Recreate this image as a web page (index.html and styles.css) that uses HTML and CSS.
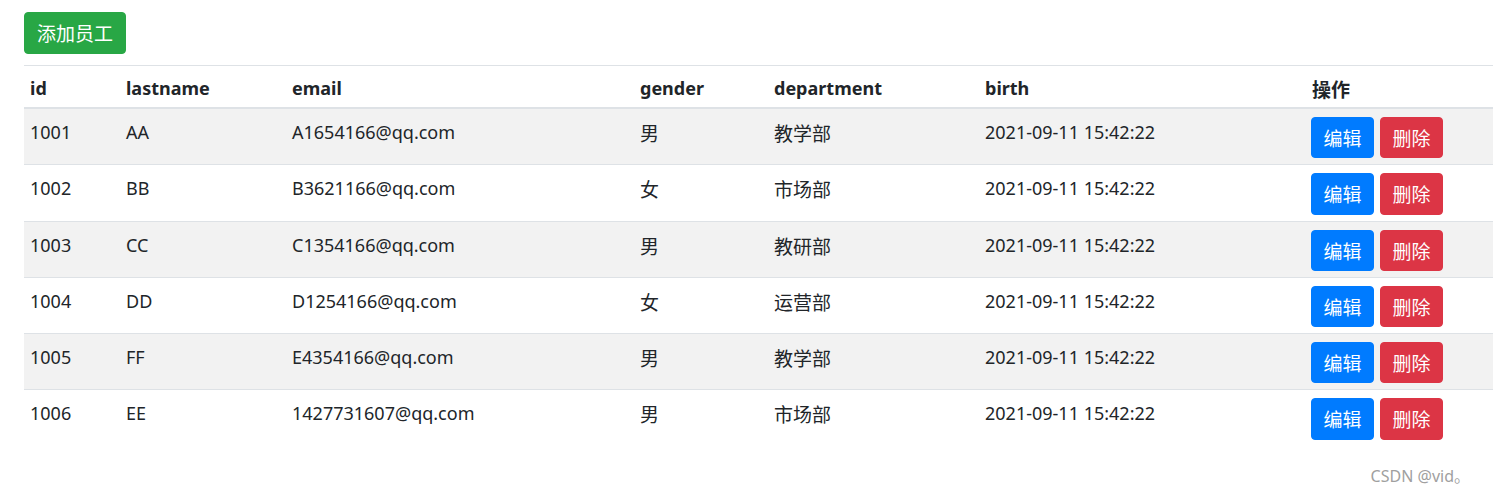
FILE: index.html
```html
<!DOCTYPE html>
<html lang="zh-CN">
<head>
<meta charset="utf-8">
<title>员工列表</title>
<link rel="stylesheet" href="styles.css">
</head>
<body>
<main class="page">
  <div class="toolbar">
    <a class="btn btn-success btn-add" href="#">添加员工</a>
  </div>
  <table class="table table-striped">
    <colgroup>
      <col class="c-id"><col class="c-last"><col class="c-email"><col class="c-gender"><col class="c-dept"><col class="c-birth"><col class="c-op">
    </colgroup>
    <thead>
      <tr>
        <th>id</th><th>lastname</th><th>email</th><th>gender</th><th>department</th><th>birth</th><th class="zh">操作</th>
      </tr>
    </thead>
    <tbody>
      <tr>
        <td>1001</td><td>AA</td><td>A1654166@qq.com</td><td class="zh">男</td><td class="zh">教学部</td><td>2021-09-11 15:42:22</td>
        <td class="op-cell"><div class="ops"><a class="btn btn-primary" href="#">编辑</a><a class="btn btn-danger" href="#">删除</a></div></td>
      </tr>
      <tr>
        <td>1002</td><td>BB</td><td>B3621166@qq.com</td><td class="zh">女</td><td class="zh">市场部</td><td>2021-09-11 15:42:22</td>
        <td class="op-cell"><div class="ops"><a class="btn btn-primary" href="#">编辑</a><a class="btn btn-danger" href="#">删除</a></div></td>
      </tr>
      <tr>
        <td>1003</td><td>CC</td><td>C1354166@qq.com</td><td class="zh">男</td><td class="zh">教研部</td><td>2021-09-11 15:42:22</td>
        <td class="op-cell"><div class="ops"><a class="btn btn-primary" href="#">编辑</a><a class="btn btn-danger" href="#">删除</a></div></td>
      </tr>
      <tr>
        <td>1004</td><td>DD</td><td>D1254166@qq.com</td><td class="zh">女</td><td class="zh">运营部</td><td>2021-09-11 15:42:22</td>
        <td class="op-cell"><div class="ops"><a class="btn btn-primary" href="#">编辑</a><a class="btn btn-danger" href="#">删除</a></div></td>
      </tr>
      <tr>
        <td>1005</td><td>FF</td><td>E4354166@qq.com</td><td class="zh">男</td><td class="zh">教学部</td><td>2021-09-11 15:42:22</td>
        <td class="op-cell"><div class="ops"><a class="btn btn-primary" href="#">编辑</a><a class="btn btn-danger" href="#">删除</a></div></td>
      </tr>
      <tr>
        <td>1006</td><td>EE</td><td>1427731607@qq.com</td><td class="zh">男</td><td class="zh">市场部</td><td>2021-09-11 15:42:22</td>
        <td class="op-cell"><div class="ops"><a class="btn btn-primary" href="#">编辑</a><a class="btn btn-danger" href="#">删除</a></div></td>
      </tr>
    </tbody>
  </table>
</main>
<div class="watermark">CSDN @vid。</div>
</body>
</html>
```

FILE: styles.css
```css
html, body {
  margin: 0;
  padding: 0;
  background: #fff;
}
body {
  font-family: "Noto Sans", "Noto Sans CJK SC", sans-serif;
  font-size: 18px;
  color: #212529;
  position: relative;
  height: 496px;
  overflow: hidden;
}
.page {
  padding: 12px 0 0 24px;
}
.toolbar {
  display: flex;
  margin-bottom: 11px;
}
.btn {
  display: inline-block;
  font-family: "Noto Sans CJK SC", "Noto Sans", sans-serif;
  font-size: 19px;
  line-height: 27.25px;
  padding: 6px 11.5px;
  border: 1px solid transparent;
  border-radius: 4px;
  color: #fff;
  text-decoration: none;
  text-align: center;
  white-space: nowrap;
}
.btn-add {
  line-height: 28px;
  padding: 6px 12px;
}
.btn-success { background: #28a745; border-color: #28a745; }
.btn-primary { background: #007bff; border-color: #007bff; }
.btn-danger { background: #dc3545; border-color: #dc3545; }

.table {
  width: 100%;
  table-layout: fixed;
  border-collapse: collapse;
}
.c-id { width: 96px; }
.c-last { width: 166px; }
.c-email { width: 348px; }
.c-gender { width: 134px; }
.c-dept { width: 211px; }
.c-birth { width: 327px; }
.c-op { width: auto; }

.table th, .table td {
  padding: 10px 6px 6px;
  line-height: 27px;
  vertical-align: top;
  text-align: left;
  border-top: 1px solid #dee2e6;
  white-space: nowrap;
}
.table th {
  font-weight: 700;
  padding: 9px 6px 5px;
}
.table thead th {
  border-bottom: 2px solid #dee2e6;
}
.table td.op-cell {
  padding: 8px 5px 6px;
}
.table td.zh, .table th.zh {
  font-family: "Noto Sans CJK SC", "Noto Sans", sans-serif;
  font-size: 19px;
}
.table-striped tbody tr:nth-of-type(odd) {
  background: #f2f2f2;
}
.ops {
  display: flex;
  gap: 6px;
}
.watermark {
  position: absolute;
  right: 23px;
  bottom: 10px;
  font-family: "Noto Sans", sans-serif;
  font-size: 16px;
  line-height: 20px;
  color: #a0a0a0;
}
```
